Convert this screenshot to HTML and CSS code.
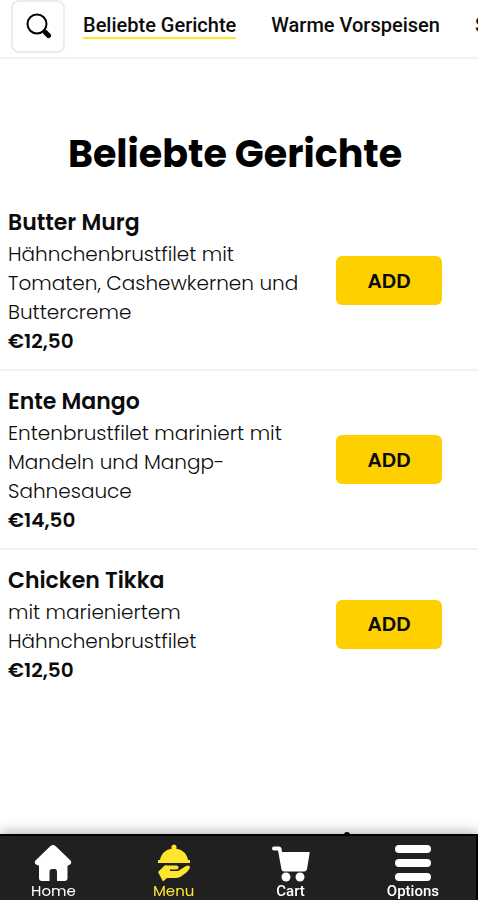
FILE: index.html
```html
<!DOCTYPE html>
<html lang="de">
<head>
    <meta charset="utf-8">
    <meta name="viewport" content="width=device-width, initial-scale=1">
    <title>Beliebte Gerichte</title>
    <link rel="stylesheet" href="styles.css">
</head>
<body>
    <header class="topbar">
        <button class="search" aria-label="Suche">
            <svg width="28" height="28" viewBox="0 0 28 28" fill="none" stroke="#000" stroke-linecap="round">
                <circle cx="13" cy="11" r="9.500" stroke-width="2"/>
                <path d="M19.500 17.500L21 19" stroke-width="2"/>
                <path d="M21.500 19.500L24.500 22.500" stroke-width="5"/>
            </svg>
        </button>
        <nav class="categories">
            <a href="#beliebt" class="active">Beliebte Gerichte</a>
            <a href="#warm">Warme Vorspeisen</a>
            <a href="#suppen">Suppen</a>
        </nav>
    </header>

    <main id="beliebt">
        <h1>Beliebte Gerichte</h1>

        <div class="dish">
            <div class="info">
                <h2>Butter Murg</h2>
                <p>Hähnchenbrustfilet mit<br>Tomaten, Cashewkernen und<br>Buttercreme</p>
                <p class="price">€12,50</p>
            </div>
            <button class="add">ADD</button>
        </div>

        <div class="dish">
            <div class="info">
                <h2>Ente Mango</h2>
                <p>Entenbrustfilet mariniert mit<br>Mandeln und Mangp-<br>Sahnesauce</p>
                <p class="price">€14,50</p>
            </div>
            <button class="add">ADD</button>
        </div>

        <div class="dish">
            <div class="info">
                <h2>Chicken Tikka</h2>
                <p>mit marieniertem<br>Hähnchenbrustfilet</p>
                <p class="price">€12,50</p>
            </div>
            <button class="add">ADD</button>
        </div>
    </main>

    <nav class="bottom">
        <span class="dot"></span>
        <div class="links">
            <a href="#home">
                <svg width="38" height="38" viewBox="0 0 38 38" fill="currentColor">
                    <path d="M16.500 2Q19 0 21.500 2L36 16Q38.500 18.500 36 20.500Q35 21.500 33.500 21.500V34Q33.500 37 30.500 37H23V28Q23 25 20.500 25H18Q15.500 25 15.500 28V37H8Q5 37 5 34V21.500Q3.500 21.500 2 20.500Q-0.500 18.500 2 16Z"/>
                </svg>
                Home
            </a>
            <a href="#menu" class="active">
                <svg width="38" height="38" viewBox="0 0 38 38" fill="currentColor">
                    <path d="M17 4.500A2.500 2.500 0 1 1 21 4.500C28 6 32 10 33 16H35V19H3V16H5C6 10 10 6 17 4.500Z"/>
                    <path d="M3 28L9 22Q10 21 13 21.500H22Q24 22 23.500 24Q23 25.500 21 25.500H15V27H23L31 22Q34 20.500 35 23Q35 25 32 28L26 32.500Q23 34 20 34H12L8 37.500Z"/>
                </svg>
                Menu
            </a>
            <a href="#cart" class="narrow">
                <svg width="38" height="38" viewBox="0 0 38 38" fill="currentColor">
                    <path d="M2 2.500H7Q9 2.500 9.500 4.500L10 8H37Q38 8 37.500 10L35 25Q34.500 27.500 32 27.500H12Q10 27.500 9.500 25.500L6 6.500H2Q0 6.500 0 4.500T2 2.500Z"/>
                    <circle cx="14" cy="33" r="4.500"/>
                    <circle cx="28" cy="33" r="4.500"/>
                </svg>
                Cart
            </a>
            <a href="#options" class="narrow">
                <svg width="38" height="38" viewBox="0 0 38 38" fill="currentColor">
                    <rect x="1" y="1" width="36" height="8" rx="4"/>
                    <rect x="1" y="15" width="36" height="8" rx="4"/>
                    <rect x="1" y="29" width="36" height="8" rx="4"/>
                </svg>
                Options
            </a>
        </div>
    </nav>
</body>
</html>
```
FILE: styles.css
```css
* { box-sizing: border-box; }
body { margin: 0; background: #fff; color: #0c0c0c; font-family: Poppins, Inter, sans-serif; overflow-x: hidden; }
a { color: inherit; text-decoration: none; }
button { cursor: pointer; font-family: inherit; color: inherit; }
h1, h2, p { margin: 0; }

.topbar { display: flex; align-items: flex-start; padding: 0 0 4px 11px; border-bottom: 2px solid #f2f2f2; overflow: hidden; }
.search { flex: none; display: flex; align-items: center; justify-content: center; width: 54px; height: 53px; padding: 0; background: #fff; border: 2px solid #ececec; border-radius: 8px; }
.categories { display: flex; gap: 35px; margin-left: 18px; padding-top: 13px; font: 500 20px/24px Roboto, sans-serif; white-space: nowrap; }
.categories a { border-bottom: 2px solid transparent; }
.categories .active { border-color: #ffe62e; }

main { padding: 71px 0 110px; }
h1 { margin-bottom: 14px; padding-right: 8px; font-size: 38px; line-height: 48px; font-weight: 700; text-align: center; color: #000; }

.dish { display: flex; align-items: center; justify-content: space-between; padding: 13px 36px 13px 8px; border-bottom: 2px solid #f2f2f2; }
.dish:last-child { border-bottom: none; }
h2 { font-size: 22px; line-height: 35px; font-weight: 600; }
.dish p { font-size: 20px; line-height: 29px; font-weight: 300; }
.dish .price { font-weight: 600; }
.add { flex: none; width: 106px; height: 49px; padding: 0; background: #ffd000; border: none; border-radius: 6px; font-size: 20px; font-weight: 600; }

.bottom { position: fixed; left: 0; right: 0; bottom: 0; color: #fff; box-shadow: 0 -2px 12px rgba(0, 0, 0, 0.3); }
.links { position: relative; display: flex; justify-content: space-between; padding: 8px 37px 0 31px; background: #202020; border: solid #000; border-width: 2px 2px 0 0; }
.links a { display: flex; flex-direction: column; align-items: center; font-size: 15px; line-height: 18px; }
.links .narrow { font-family: Roboto, sans-serif; font-weight: 500; }
.links .active { color: #ffe62e; }
.dot { position: absolute; left: 72%; top: -2px; width: 6px; height: 6px; border-radius: 3px; background: #000; }
```
